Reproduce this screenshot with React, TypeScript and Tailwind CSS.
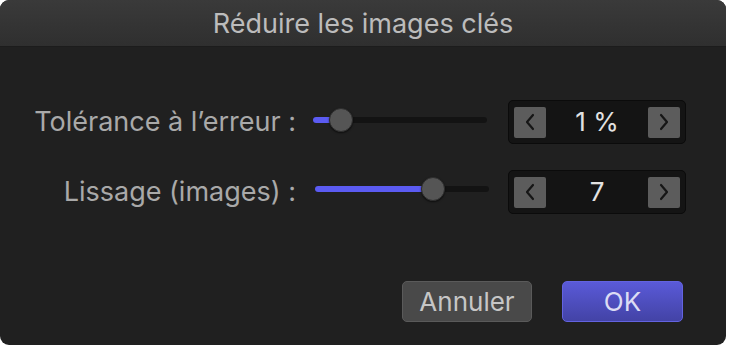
import React from "react";

function Chevron({ dir }: { dir: "l" | "r" }) {
  return (
    <svg width="12" height="18" viewBox="0 0 12 18">
      <path
        d={dir === "l" ? "M9 2 L3 9 L9 16" : "M3 2 L9 9 L3 16"}
        fill="none"
        stroke="#161616"
        strokeWidth="2.2"
        strokeLinecap="round"
        strokeLinejoin="round"
      />
    </svg>
  );
}

function Stepper({ value }: { value: string }) {
  return (
    <div className="flex h-[44px] w-[178px] items-center justify-between rounded-[5px] border border-[#0b0b0b] bg-[#141414] px-[5px]">
      <div className="flex h-[31px] w-[32px] items-center justify-center rounded-[2px] bg-[#5c5c5c]">
        <Chevron dir="l" />
      </div>
      <span className="text-[26px] leading-none text-[#e2e2e2]">{value}</span>
      <div className="flex h-[31px] w-[32px] items-center justify-center rounded-[2px] bg-[#5c5c5c]">
        <Chevron dir="r" />
      </div>
    </div>
  );
}

function Slider({ thumb, offset }: { thumb: number; offset: string }) {
  return (
    <div className={`relative h-[24px] w-[174px] ${offset}`}>
      <div className="absolute left-0 right-0 top-[9px] h-[6px] rounded-full bg-[#131313]" />
      <div
        className="absolute left-0 top-[9px] h-[6px] rounded-full bg-[#5b5bf2]"
        style={{ width: thumb + 12 }}
      />
      <div
        className="absolute top-0 h-[24px] w-[24px] rounded-full border border-[#2e2e2e] bg-[#555555] shadow-[0_1px_2px_rgba(0,0,0,0.6)]"
        style={{ left: thumb }}
      />
    </div>
  );
}

export default function App() {
  return (
    <div
      className="h-[348px] w-[729px] bg-white"
      style={{ fontFamily: "Inter, Roboto, 'Liberation Sans', sans-serif" }}
    >
      <div className="flex h-[345px] w-[726px] flex-col overflow-hidden rounded-[9px] bg-[#202020]">
        <div className="flex h-[47px] items-center justify-center border-b border-[#1c1c1c] bg-gradient-to-b from-[#3a3a3a] to-[#2f2f2f]">
          <span className="text-[27px] leading-none text-[#bcbcbc]">Réduire les images clés</span>
        </div>
        <div className="flex flex-col pt-[53px]">
          <div className="flex h-[44px] items-center">
            <div className="w-[296px] pb-[1px] text-right text-[27px] leading-none text-[#a9a9a9]">
              Tolérance à l’erreur :
            </div>
            <Slider thumb={16} offset="ml-[17px] -mt-[5px]" />
            <div className="ml-[21px]">
              <Stepper value="1 %" />
            </div>
          </div>
          <div className="mt-[26px] flex h-[44px] items-center">
            <div className="w-[296px] pb-[1px] text-right text-[27px] leading-none text-[#a9a9a9]">
              Lissage (images) :
            </div>
            <Slider thumb={106} offset="ml-[19px] -mt-[6px]" />
            <div className="ml-[19px]">
              <Stepper value="7" />
            </div>
          </div>
          <div className="mt-[67px] flex justify-end gap-[30px] pr-[43px]">
            <button className="h-[41px] w-[130px] rounded-[5px] border border-[#5a5a5a] bg-[#494949] text-[26px] leading-none text-[#c6c6c6]">
              Annuler
            </button>
            <button className="h-[41px] w-[121px] rounded-[5px] border border-[#6363e0] bg-gradient-to-b from-[#5a5ad8] to-[#4343a6] text-[26px] leading-none text-[#dcdcf4]">
              OK
            </button>
          </div>
        </div>
      </div>
    </div>
  );
}
